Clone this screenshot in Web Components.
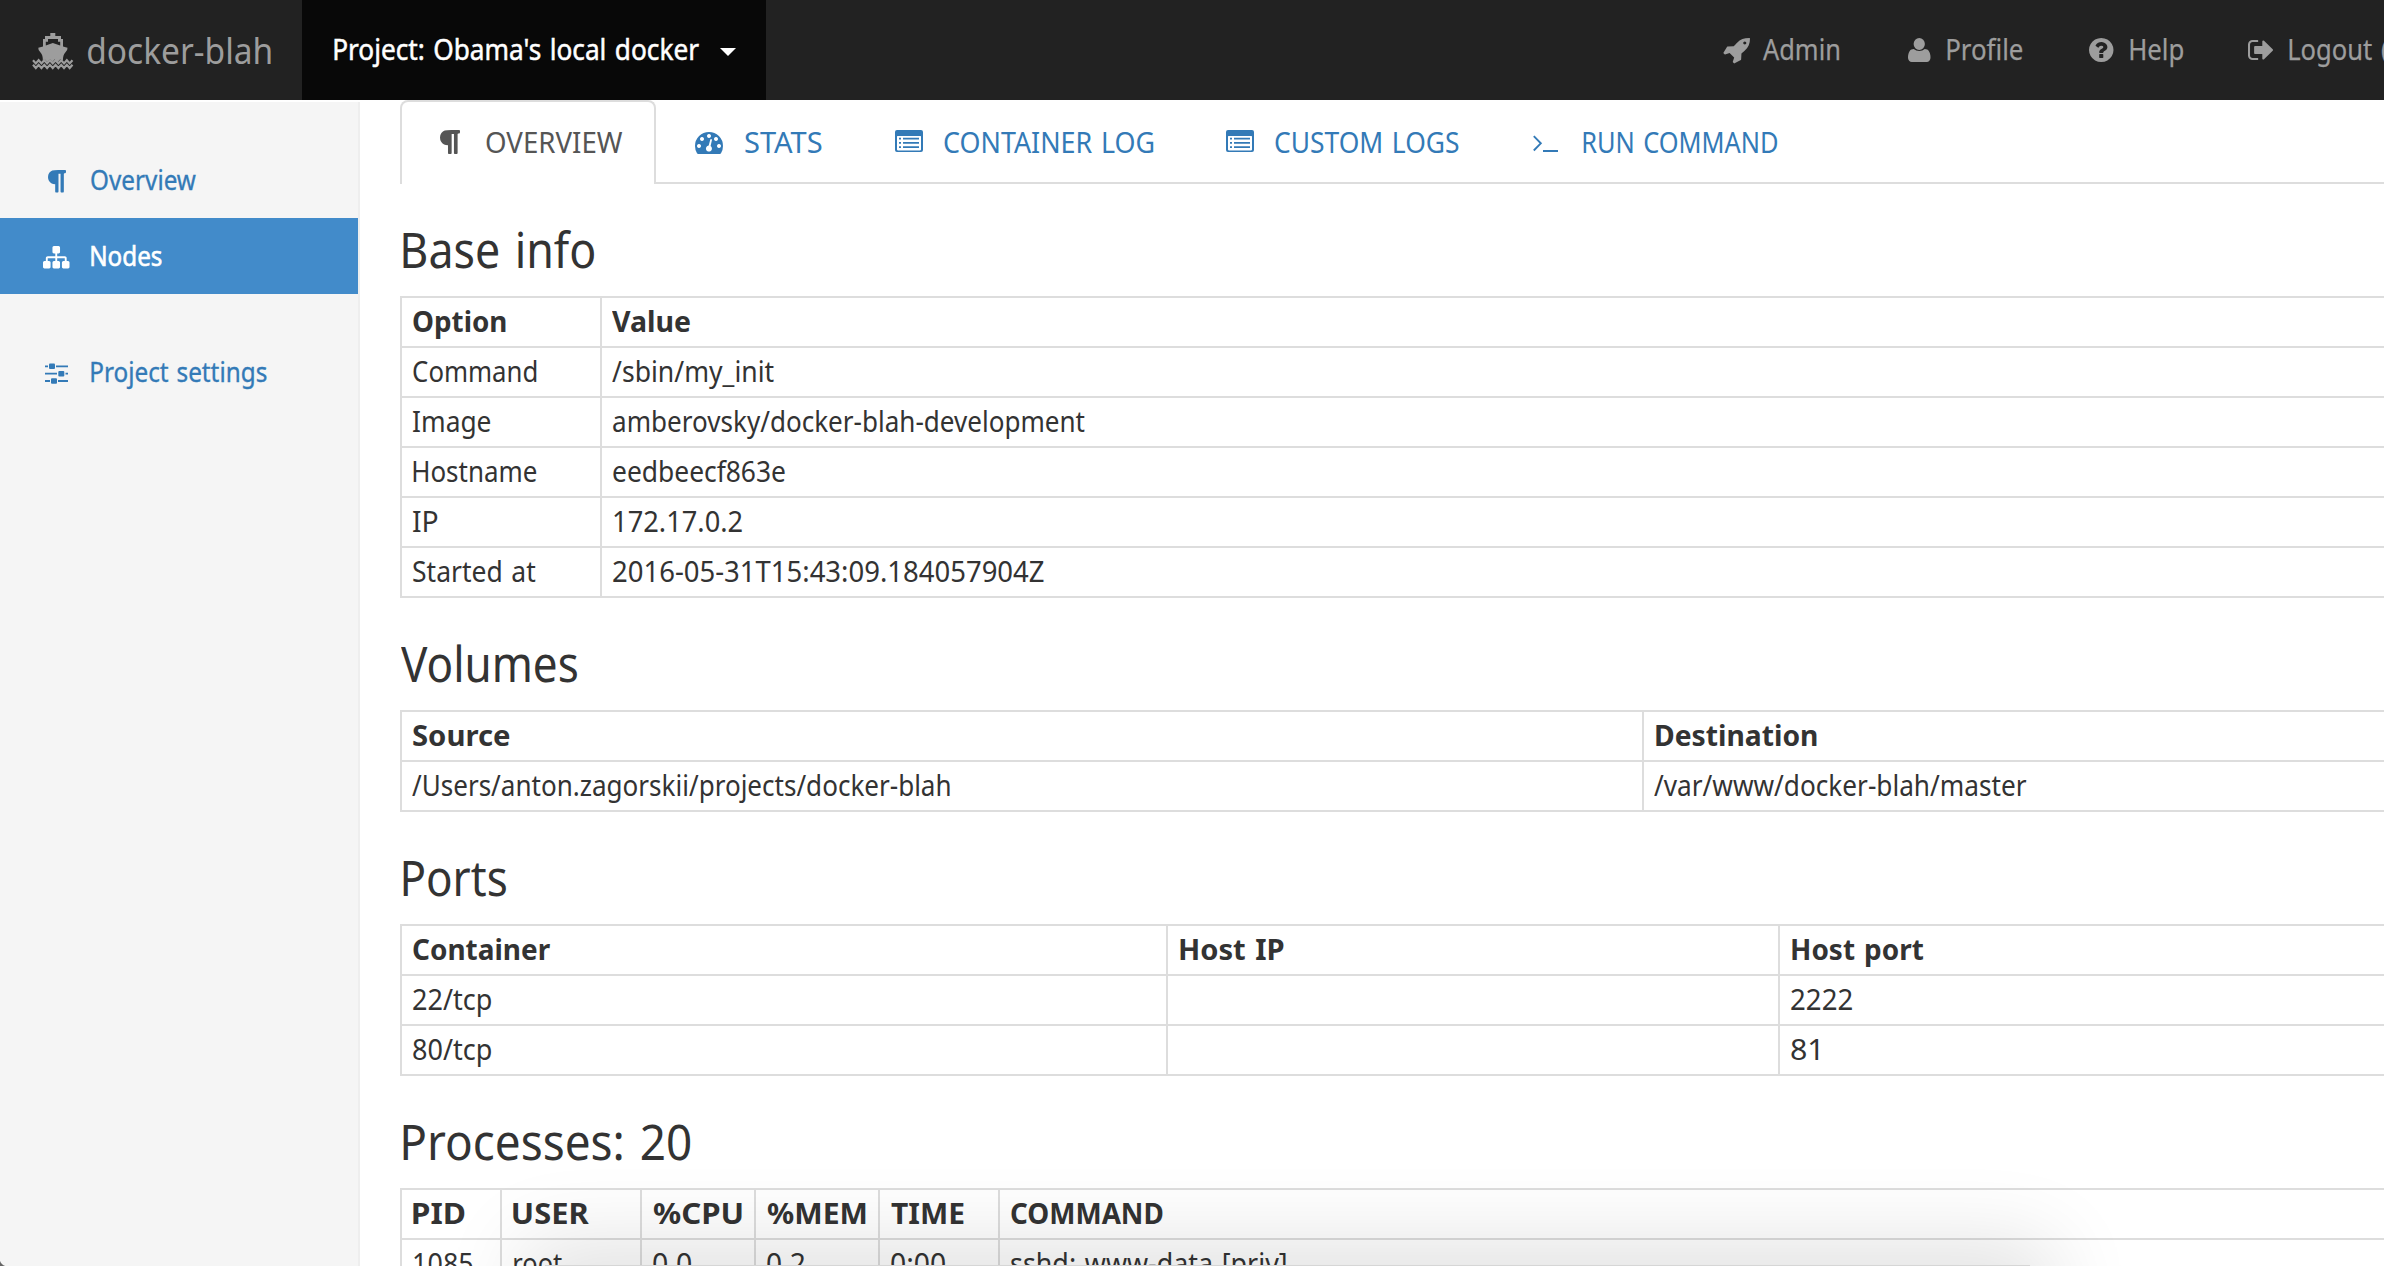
<!DOCTYPE html>
<html lang="en">
<head>
<meta charset="utf-8">
<title>docker-blah</title>
<style>
html, body { margin: 0; height: 100%; overflow: hidden; background: #fff; }
body { font-family: "Noto Sans", "DejaVu Sans", sans-serif; font-size: 28.5px; color: #333; }
</style>
</head>
<body>
<docker-app></docker-app>
<script>
const ctx = document.createElement('canvas').getContext('2d');

/* A run of text set to a given ink width; its box starts at the first stroke. */
customElements.define('text-run', class extends HTMLElement {
  constructor() {
    super();
    this.attachShadow({ mode: 'open' }).innerHTML =
      '<style>:host{display:inline-block;white-space:pre;flex:none}span{display:block;width:max-content;transform-origin:0 0;word-spacing:.065em;font-variant-ligatures:none}</style><span><slot></slot></span>';
  }
  connectedCallback() {
    const w = +this.getAttribute('w'), t = this.textContent, cs = getComputedStyle(this);
    ctx.font = `${cs.fontWeight} ${cs.fontSize} ${cs.fontFamily}`;
    ctx.letterSpacing = '0.01px';
    const m = ctx.measureText(t);
    const spaces = t.split(' ').length - 1;
    const ink = m.actualBoundingBoxLeft + m.actualBoundingBoxRight + spaces * .065 * parseFloat(cs.fontSize);
    const k = w / ink;
    this.style.width = w + 'px';
    const span = this.shadowRoot.querySelector('span');
    span.style.transform = `translateX(${(m.actualBoundingBoxLeft * k).toFixed(2)}px) scaleX(${k.toFixed(4)})`;
  }
});

const wave = y => { let d = `M0 ${y}`; for (let i = 0; i < 7; i++) d += `l2.82 3.2l2.82 -3.2`; return `<path d="${d}" fill="none" stroke="currentColor" stroke-width="2.2"/>`; };
const list = `<path fill-rule="evenodd" d="M2 0H26Q28 0 28 2V20Q28 22 26 22H2Q0 22 0 20V2Q0 0 2 0ZM2.6 6Q2 6 2 6.6V19.6Q2 20.4 2.8 20.4H25.2Q26 20.4 26 19.6V6.6Q26 6 25.4 6Z"/><path d="M4 7.8h2v1.8h-2zM8 7.8h16v1.8h-16zM4 12h2v1.8h-2zM8 12h16v1.8h-16zM4 16.2h2v1.8h-2zM8 16.2h16v1.8h-16z"/>`;
const ICONS = {
  ship: ['0 0 39.5 36', `<path d="M17.3 0H22.3V3H28V6H30V13.4L34.5 14.8Q34.8 17.5 32.3 19.5Q29.8 22 30 27.2L27.5 26L24.7 29L22 26L19.5 29L17 26L14.2 29L11.5 26L9.8 27.5Q10 22 7.5 19.5Q5 17.5 5.3 14.8L10 13.4V6H12V3H17.3ZM12.8 12.5L19.8 10L27.2 12.5V8.8H25V6H15V8.8H12.8Z" fill-rule="evenodd"/>${wave(27.2)}${wave(31.8)}`],
  rocket: ['128 128 1536 1604', `<path d="M1440 448q0-40-28-68t-68-28-68 28-28 68 28 68 68 28 68-28 28-68zm224-288q0 249-75.5 430.5t-253.5 360.5q-81 80-195 176l-20 379q-2 16-16 26l-384 224q-7 4-16 4-12 0-23-9l-64-64q-13-14-8-32l85-276-281-281-276 85q-3 1-9 1-14 0-23-9l-64-64q-17-19-5-39l224-384q10-14 26-16l379-20q96-114 176-195 188-187 358-258t431-71q14 0 24 9.5t10 22.5z" transform="translate(60 0) scale(.964 1)"/>`],
  user: ['256 128 1280 1536', `<path d="M1536 1399q0 109-62.5 187t-150.5 78h-854q-88 0-150.5-78t-62.5-187q0-85 8.5-160.5t31.5-152 58.5-131 94-89 134.5-34.5q131 128 313 128t313-128q76 0 134.5 34.5t94 89 58.5 131 31.5 152 8.5 160.5zm-320-887q0 159-93.750 271.500t-226.250 112.500-226.250-112.500-93.750-271.500 93.750-271.500 226.250-112.500 226.250 112.500 93.750 271.500z"/>`],
  help: ['128 128 1536 1536', `<path d="M1024 1376v-192q0-14-9-23t-23-9h-192q-14 0-23 9t-9 23v192q0 14 9 23t23 9h192q14 0 23-9t9-23zm256-672q0-88-55.500-163t-138.500-116-170-41q-243 0-371 213-15 24 8 42l132 100q7 6 19 6 16 0 25-12 53-68 86-92 34-24 86-24 48 0 85.500 26t37.500 59q0 38-20 61t-68 45q-63 28-115.500 86.500t-52.500 125.500v36q0 14 9 23t23 9h192q14 0 23-9t9-23q0-19 21.500-49.500t54.500-49.500q32-18 49-28.500t46-35 44.500-48 28-60.500 12.500-81zm384 192q0 209-103 385.500t-279.500 279.500-385.500 103-385.500-103-279.500-279.500-103-385.500 103-385.500 279.500-279.500 385.500-103 385.500 103 279.500 279.500 103 385.500z"/>`],
  logout: ['64 256 1568 1280', `<path d="M704 1440q0 4 1 20t.5 26.500-3 23.500-10 19.500-20.500 6.500h-320q-119 0-203.500-84.500t-84.500-203.500v-704q0-119 84.500-203.500t203.500-84.500h320q13 0 22.500 9.500t9.500 22.500q0 4 1 20t.5 26.500-3 23.500-10 19.500-20.500 6.500h-320q-66 0-113 47t-47 113v704q0 66 47 113t113 47h312l11.500 1 11.500 3 8 5.500 7 9 2 13.500zm928-544q0 26-19 45l-544 544q-19 19-45 19t-45-19-19-45v-288h-448q-26 0-45-19t-19-45v-384q0-26 19-45t45-19h448v-288q0-26 19-45t45-19 45 19l544 544q19 19 19 45z"/>`],
  paragraph: ['280 128 1254 1536', `<path d="M1534 189v73q0 29-18.500 61t-42.500 32q-50 0-54 1-26 6-32 31-3 11-3 64v1152q0 25-18 43t-43 18h-108q-25 0-43-18t-18-43v-1218h-143v1218q0 25-17.500 43t-43.500 18h-108q-26 0-43.500-18t-17.500-43v-496q-147-12-245-59-126-58-192-179-64-117-64-259 0-166 88-286 88-118 209-159 111-37 417-37h479q25 0 43 18t18 43z"/>`],
  sitemap: ['0 128 1792 1536', `<path d="M1792 1248v320q0 40-28 68t-68 28h-320q-40 0-68-28t-28-68v-320q0-40 28-68t68-28h96v-192h-512v192h96q40 0 68 28t28 68v320q0 40-28 68t-68 28h-320q-40 0-68-28t-28-68v-320q0-40 28-68t68-28h96v-192h-512v192h96q40 0 68 28t28 68v320q0 40-28 68t-68 28h-320q-40 0-68-28t-28-68v-320q0-40 28-68t68-28h96v-192q0-52 38-90t90-38h512v-192h-96q-40 0-68-28t-28-68v-320q0-40 28-68t68-28h320q40 0 68 28t28 68v320q0 40-28 68t-68 28h-96v192h512q52 0 90 38t38 90v192h96q40 0 68 28t28 68z"/>`],
  gauge: ['0 0 28 22', `<path fill-rule="evenodd" d="M14 0A14 14 0 0 1 28 14Q28 18 26 21.300Q25.600 22 24.800 22H3.200Q2.400 22 2 21.300Q0 18 0 14A14 14 0 0 1 14 0ZM4 12a2 2 0 1 0 .01 0ZM7 5a2 2 0 1 0 .01 0ZM14 2a2 2 0 1 0 .01 0ZM21 5a2 2 0 1 0 .01 0ZM24 12a2 2 0 1 0 .01 0ZM15.300 7.400L13.700 13.600A3 3 0 1 0 15.600 14.100L17 7.800Q16.200 6.600 15.300 7.400Z"/>`],
  list: ['0 0 28 22', list],
  terminal: ['0 0 25 17', `<path d="M.8 1.200L7.800 8.300L.8 15.500" fill="none" stroke="currentColor" stroke-width="1.900"/><path d="M10 15h15v2h-15z"/>`],
  sliders: ['0 0 23 21', `<path d="M0 2.400h3v1.800h-3zM11 2.400h12v1.800h-12zM0 9.700h12v1.800h-12zM20.500 9.700h2.500v1.800h-2.500zM0 17.100h5v1.800h-5zM13 17.100h10v1.800h-10z"/><rect x="4" y=".5" width="6" height="5.500" rx="1"/><rect x="13.300" y="7.900" width="6" height="5.500" rx="1"/><rect x="6" y="15.300" width="6" height="5.500" rx="1"/>`],
  caret: ['0 0 16 8', `<path d="M0 0H16L8 8Z"/>`],
};
customElements.define('glyph-icon', class extends HTMLElement {
  connectedCallback() {
    const [box, body] = ICONS[this.getAttribute('name')];
    const w = this.getAttribute('w'), h = this.getAttribute('h'), y = this.getAttribute('y');
    this.attachShadow({ mode: 'open' }).innerHTML =
      `<style>:host{display:block;flex:none;align-self:flex-start;margin-top:${y}px;width:${w}px;height:${h}px}svg{display:block;fill:currentColor;overflow:visible}</style>
       <svg width="${w}" height="${h}" viewBox="${box}" preserveAspectRatio="none">${body}</svg>`;
  }
});

/* Defines an element whose shadow root is a fixed piece of markup. */
const define = (name, html) => customElements.define(name, class extends HTMLElement {
  constructor() {
    super();
    const t = document.createElement('template');
    t.innerHTML = html;
    this.attachShadow({ mode: 'open' }).append(document.importNode(t.content, true));
  }
});

define('top-bar', `
<style>
:host{display:flex;height:100px;background:#222;color:#9d9d9d;overflow:hidden;line-height:99px}
div{display:flex;flex:none;box-sizing:border-box}
.brand{width:302px;padding-left:33px;font-size:36.600px;line-height:100px;gap:15.500px}
.project{width:464px;background:#080808;color:#fff;padding-left:32px;gap:20.500px;-webkit-text-stroke:.5px currentColor}
.links{margin-left:957.500px;-webkit-text-stroke:.25px currentColor}
.links div{margin-right:var(--after)}
</style>
<div class="brand"><glyph-icon name="ship" w="39.5" h="36" y="33"></glyph-icon><text-run w="183">docker-blah</text-run></div>
<div class="project"><text-run w="365.5">Project: Obama's local docker</text-run><glyph-icon name="caret" w="16" h="8" y="48"></glyph-icon></div>
<div class="links">
<div style="gap:13.500px;--after:68px"><glyph-icon name="rocket" w="26" h="25" y="38"></glyph-icon><text-run w="76.5">Admin</text-run></div>
<div style="gap:17px;--after:66px"><glyph-icon name="user" w="22.5" h="24" y="38"></glyph-icon><text-run w="75.5">Profile</text-run></div>
<div style="gap:16.500px;--after:65.500px"><glyph-icon name="help" w="24.500" h="24" y="38"></glyph-icon><text-run w="53">Help</text-run></div>
<div style="gap:16px"><glyph-icon name="logout" w="25" h="20" y="40"></glyph-icon><text-run w="83">Logout</text-run><text-run w="8" style="margin-left:10.500px">(</text-run></div>
</div>`.replace('gap:16px"><glyph-icon name="logout"', 'gap:0"><glyph-icon name="logout" style="margin-right:15.500px"'));

define('side-item', `
<style>
:host{display:flex;height:76px;line-height:75px;color:#337ab7;font-size:27.200px;-webkit-text-stroke:.35px currentColor}
:host([active]){background:#428bca;color:#fff;-webkit-text-stroke-width:.6px}
.icon{display:flex;justify-content:center;width:26px;flex:none;margin:0 21px 0 43.500px;-webkit-text-stroke:0}
</style><div class="icon"><slot name="icon"></slot></div><slot></slot>`);

define('side-bar', `
<style>
:host{display:block;box-sizing:border-box;width:360px;flex:none;margin-top:2px;padding-top:40px;background:#f5f5f5;border-right:2px solid #eee}
.gap{height:40px}
</style>
<side-item><glyph-icon slot="icon" name="paragraph" w="18" h="22.500" y="27.500"></glyph-icon><text-run w="105.500">Overview</text-run></side-item>
<side-item active><glyph-icon slot="icon" name="sitemap" w="26.500" h="22.500" y="27.500"></glyph-icon><text-run w="70.500">Nodes</text-run></side-item>
<div class="gap"></div>
<side-item><glyph-icon slot="icon" name="sliders" w="23" h="21" y="29"></glyph-icon><text-run w="175.500">Project settings</text-run></side-item>`);

define('tab-item', `
<style>
:host{display:flex;box-sizing:border-box;height:82px;line-height:80px;color:#337ab7;flex:none;padding-top:2px}
:host([active]){height:84px;color:#555;background:#fff;border:2px solid #ddd;border-bottom:0;border-radius:8px 8px 0 0;padding-top:0}
</style><slot></slot>`);

define('tab-strip', `
<style>
:host{display:flex;height:82px;border-bottom:2px solid #ddd}
</style>
<tab-item active style="width:256px;padding-left:38px;box-sizing:border-box"><glyph-icon name="paragraph" w="20" h="24" y="28"></glyph-icon><text-run w="137" style="margin-left:26px">OVERVIEW</text-run></tab-item>
<tab-item style="margin-left:39px"><glyph-icon name="gauge" w="28" h="22" y="30"></glyph-icon><text-run w="77" style="margin-left:22px">STATS</text-run></tab-item>
<tab-item style="margin-left:72.500px"><glyph-icon name="list" w="28" h="22" y="28"></glyph-icon><text-run w="209.500" style="margin-left:21.500px">CONTAINER LOG</text-run></tab-item>
<tab-item style="margin-left:72px"><glyph-icon name="list" w="28" h="22" y="28"></glyph-icon><text-run w="184" style="margin-left:21.500px">CUSTOM LOGS</text-run></tab-item>
<tab-item style="margin-left:74px"><glyph-icon name="terminal" w="25" h="17" y="33"></glyph-icon><text-run w="195" style="margin-left:24.500px">RUN COMMAND</text-run></tab-item>`);

/* Heading with a bordered grid; each cell is [text, ink width, ink offset]. */
customElements.define('info-section', class extends HTMLElement {
  connectedCallback() {
    const { title, cols, rows } = SECTIONS[this.getAttribute('name')];
    const run = ([t, w, dx]) => t ? `<text-run w="${w}" style="margin-left:${dx}px">${t}</text-run>` : '';
    this.attachShadow({ mode: 'open' }).innerHTML = `
<style>
:host{display:block;padding-top:40px}
h2{margin:0;height:72px;font-size:48.900px;font-weight:400;line-height:51px;display:flex}
table{border-collapse:separate;border-spacing:0;table-layout:fixed;width:2100px;border-top:2px solid #ddd;border-left:2px solid #ddd}
td,th{box-sizing:border-box;height:50px;padding:0 0 2px 10px;line-height:46px;text-align:left;vertical-align:top;border-right:2px solid #ddd;border-bottom:2px solid #ddd;white-space:nowrap}
text-run{vertical-align:top}
</style>
<h2>${run(title)}</h2>
<table><colgroup>${cols.map(c => `<col style="width:${c}px">`).join('')}<col></colgroup>
${rows.map((r, i) => `<tr>${r.map(c => i ? `<td>${run(c)}</td>` : `<th>${run(c)}</th>`).join('')}</tr>`).join('')}</table>`;
  }
});
const SECTIONS = {
  base: { title: ['Base info', 191, 2.5], cols: [200], rows: [
    [['Option', 93, 0.5], ['Value', 78, 0]],
    [['Command', 124, 0.5], ['/sbin/my_init', 162, 0]],
    [['Image', 77.5, 1], ['amberovsky/docker-blah-development', 472, 0.5]],
    [['Hostname', 123.5, 1], ['eedbeecf863e', 172, 0.5]],
    [['IP', 24.5, 1], ['172.17.0.2', 128, 1.5]],
    [['Started at', 122.5, 0.5], ['2016-05-31T15:43:09.184057904Z', 431.5, 1]]] },
  volumes: { title: ['Volumes', 176.5, 0.5], cols: [1242], rows: [
    [['Source', 96.5, 0.5], ['Destination', 161, 1.5]],
    [['/Users/anton.zagorskii/projects/docker-blah', 538.5, 0], ['/var/www/docker-blah/master', 373, 0]]] },
  ports: { title: ['Ports', 103.5, 2.5], cols: [766, 612], rows: [
    [['Container', 137.5, 0.5], ['Host IP', 104, 1.5], ['Host port', 131.5, 1.5]],
    [['22/tcp', 78, 0.5], [''], ['2222', 61, 1]],
    [['80/tcp', 78, 0.5], [''], ['81', 28, 1]]] },
  processes: { title: ['Processes: 20', 287.5, 2.5], cols: [100, 140, 114, 124, 120], rows: [
    [['PID', 52, 1], ['USER', 76, 1], ['%CPU', 89.5, 0.5], ['%MEM', 99, 0.5], ['TIME', 73, 0.5], ['COMMAND', 152, 0.5]],
    [['1085', 58.5, 2], ['root', 48, 2], ['0.0', 38, 1], ['0.2', 37.5, 1], ['0:00', 54, 1], ['sshd: www-data [priv]', 275.5, 0.5]]] },
};

define('docker-app', `
<style>
:host{display:flex;flex-direction:column;width:2384px;height:1266px;overflow:hidden;position:relative}
.body{display:flex;flex:1;min-height:0}
main{flex:1;min-width:0;padding-left:40px;overflow:hidden}
.sheet{position:absolute;left:545px;top:1265px;width:1485px;height:60px;background:#d6d6d6;box-shadow:0 0 84px 22px rgba(0,0,0,.12)}
.corner{position:absolute;left:0;bottom:0;width:8px;height:8px;background:radial-gradient(circle at 8px 0,transparent 8px,#666 9px)}
</style>
<top-bar></top-bar>
<div class="body"><side-bar></side-bar>
<main><tab-strip></tab-strip>
<info-section name="base"></info-section>
<info-section name="volumes"></info-section>
<info-section name="ports"></info-section>
<info-section name="processes"></info-section></main></div>
<div class="sheet"></div><div class="corner"></div>`);
</script>
</body>
</html>
